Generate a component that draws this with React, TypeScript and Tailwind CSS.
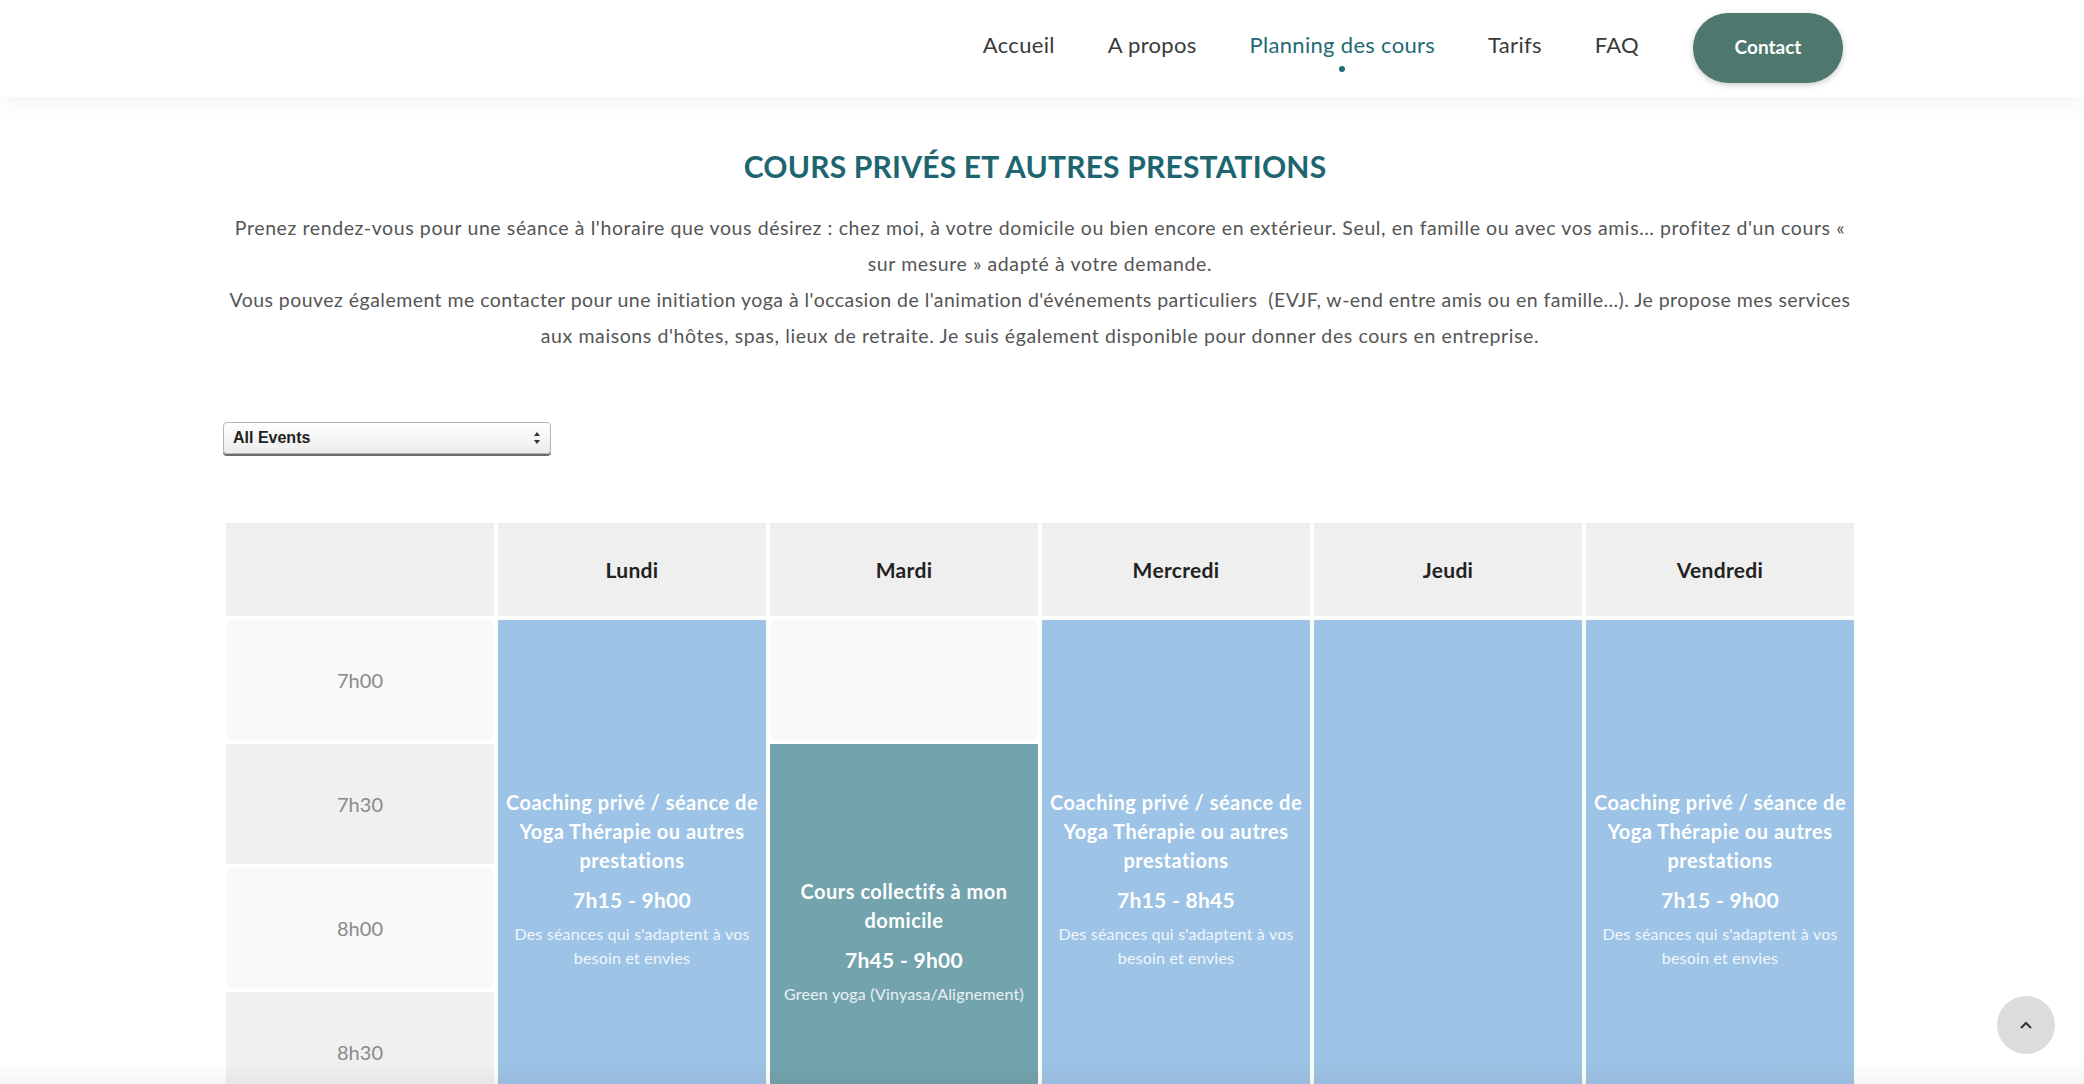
import React from "react";

const font = { fontFamily: "Lato, 'Noto Sans', sans-serif" };

function EventBlock({
  color,
  title,
  time,
  desc,
  heightClass,
}: {
  color: string;
  title: string[];
  time?: string;
  desc?: string[];
  heightClass: string;
}) {
  return (
    <div className={`${color} ${heightClass} flex flex-col items-center justify-center text-center text-white px-1`}>
      {title.length > 0 && (
        <div className="text-[20px] leading-[29px] font-bold tracking-[0.5px]">
          {title.map((t, i) => (
            <div key={i} className="whitespace-nowrap">{t}</div>
          ))}
        </div>
      )}
      {time && <div className="mt-[10px] text-[21px] leading-[30px] font-bold tracking-[0.3px]">{time}</div>}
      {desc && (
        <div className="mt-[7px] text-[16px] leading-[24px] tracking-[0.2px] text-white/85">
          {desc.map((t, i) => (
            <div key={i} className="whitespace-nowrap">{t}</div>
          ))}
        </div>
      )}
    </div>
  );
}

export default function App() {
  const coaching = ["Coaching privé / séance de", "Yoga Thérapie ou autres", "prestations"];
  const coachingDesc = ["Des séances qui s'adaptent à vos", "besoin et envies"];
  return (
    <div className="relative h-[1084px] w-full overflow-hidden bg-white" style={font}>
      {/* NAV */}
      <header className="relative z-10 h-[97px] bg-white shadow-[0_4px_22px_rgba(0,0,0,0.06)] flex items-center justify-end pr-[241px]">
        <nav className="mb-[8px] flex items-center gap-[53px] text-[22px] tracking-[0.3px] text-[#3a3a3a]">
          <a className="leading-none">Accueil</a>
          <a className="leading-none">A propos</a>
          <a className="relative leading-none text-[#1f6b73]">
            Planning des cours
            <span className="absolute left-1/2 top-[32px] -translate-x-1/2 w-[6px] h-[6px] rounded-full bg-[#1f6b73]" />
          </a>
          <a className="leading-none">Tarifs</a>
          <a className="leading-none">FAQ</a>
        </nav>
        <button className="ml-[54px] mt-[-2px] w-[150px] h-[70px] rounded-full bg-[#4e776d] text-white text-[19px] font-bold shadow-[0_2px_6px_rgba(0,0,0,0.2)]">
          Contact
        </button>
      </header>

      {/* CONTENT */}
      <main className="w-[1628px] ml-[226px]">
        <h1 className="mt-[49px] text-center text-[30px] leading-[40px] font-bold text-[#1d6670] tracking-[0.2px] pr-[10px]">
          COURS PRIVÉS ET AUTRES PRESTATIONS
        </h1>
        <div className="mt-[24px] text-center text-[19.5px] leading-[36px] tracking-[0.6px] text-[#555555]">
          <div className="whitespace-nowrap">
            Prenez rendez-vous pour une séance à l'horaire que vous désirez : chez moi, à votre domicile ou bien encore en extérieur. Seul, en famille ou avec vos amis… profitez d'un cours «
          </div>
          <div className="whitespace-nowrap">sur mesure » adapté à votre demande.</div>
          <div className="whitespace-nowrap tracking-[0.46px]">
            Vous pouvez également me contacter pour une initiation yoga à l'occasion de l'animation d'événements particuliers&nbsp; (EVJF, w-end entre amis ou en famille…). Je propose mes services
          </div>
          <div className="whitespace-nowrap">
            aux maisons d'hôtes, spas, lieux de retraite. Je suis également disponible pour donner des cours en entreprise.
          </div>
        </div>

        {/* SELECT */}
        <div className="mt-[68px] ml-[-3px] w-[328px] h-[32px] rounded-[4px] border border-[#b5b5b5] bg-gradient-to-b from-white to-[#ececec] shadow-[0_2px_0_#6b6b6b] flex items-center justify-between px-[9px]">
          <span className="text-[16px] font-bold text-[#222]" style={{ fontFamily: "'Liberation Sans', Arial, sans-serif" }}>
            All Events
          </span>
          <svg width="8" height="14" viewBox="0 0 8 14">
            <path d="M4 1 L7 5 H1 Z" fill="#333" />
            <path d="M4 13 L7 9 H1 Z" fill="#333" />
          </svg>
        </div>

        {/* TABLE */}
        <div className="mt-[69px] grid grid-cols-6 gap-1">
          <div className="h-[93px] bg-[#efefef]" />
          {["Lundi", "Mardi", "Mercredi", "Jeudi", "Vendredi"].map((d) => (
            <div key={d} className="h-[93px] bg-[#efefef] flex items-center justify-center text-[21px] tracking-[0.3px] font-bold text-[#222]">
              {d}
            </div>
          ))}

          {/* time column */}
          <div className="flex flex-col gap-1 text-[20px] text-[#8a8a8a]">
            {["7h00", "7h30", "8h00", "8h30"].map((t, i) => (
              <div key={t} className={`h-[120px] flex items-center justify-center ${i % 2 === 0 ? "bg-[#f9f9f9]" : "bg-[#f0f0f0]"}`}>
                {t}
              </div>
            ))}
          </div>

          {/* Lundi */}
          <div className="flex flex-col">
            <EventBlock color="bg-[#9dc3e6]" heightClass="h-[518px]" title={coaching} time="7h15 - 9h00" desc={coachingDesc} />
          </div>

          {/* Mardi */}
          <div className="flex flex-col gap-1">
            <div className="h-[120px] bg-[#f9f9f9]" />
            <EventBlock
              color="bg-[#73a3ad]"
              heightClass="h-[394px]"
              title={["Cours collectifs à mon", "domicile"]}
              time="7h45 - 9h00"
              desc={["Green yoga (Vinyasa/Alignement)"]}
            />
          </div>

          {/* Mercredi */}
          <div className="flex flex-col">
            <EventBlock color="bg-[#9dc3e6]" heightClass="h-[518px]" title={coaching} time="7h15 - 8h45" desc={coachingDesc} />
          </div>

          {/* Jeudi */}
          <div className="flex flex-col">
            <div className="h-[518px] bg-[#9dc3e6]" />
          </div>

          {/* Vendredi */}
          <div className="flex flex-col">
            <EventBlock color="bg-[#9dc3e6]" heightClass="h-[518px]" title={coaching} time="7h15 - 9h00" desc={coachingDesc} />
          </div>
        </div>
      </main>

      {/* bottom fade */}
      <div className="absolute left-0 right-0 bottom-0 h-[22px] bg-gradient-to-b from-transparent to-black/[0.04]" />

      {/* scroll to top */}
      <button className="absolute right-[29px] bottom-[30px] w-[58px] h-[58px] rounded-full bg-[#dcdcdc] flex items-center justify-center">
        <svg width="14" height="10" viewBox="0 0 14 10">
          <path d="M2 8 L7 3 L12 8" fill="none" stroke="#333" strokeWidth="2" />
        </svg>
      </button>
    </div>
  );
}
